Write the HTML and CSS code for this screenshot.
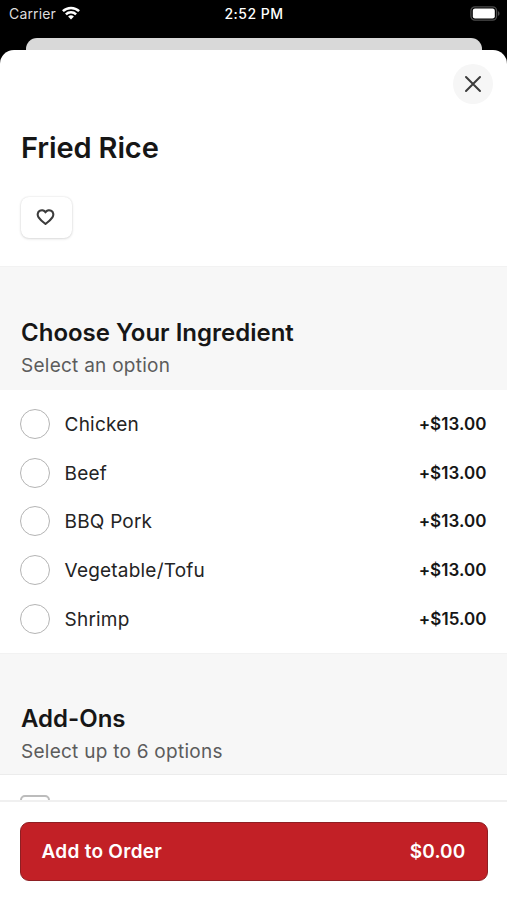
FILE: index.html
```html
<!DOCTYPE html>
<html lang="en">
<head>
<meta charset="utf-8">
<title>Fried Rice</title>
<link rel="stylesheet" href="styles.css">
</head>
<body>
<div class="screen">
  <header class="status">
    <div class="carrier"><span>Carrier</span>
      <svg class="wifi" width="18" height="14" viewBox="0 0 18 14" fill="none" stroke="#fff" stroke-width="2.5"><path d="M.9 5.2a11.6 11.6 0 0 1 16.2 0M3.9 8.3a7.3 7.3 0 0 1 10.2 0"/><path d="M9 13.5 6.1 10.6a4.1 4.1 0 0 1 5.8 0Z" fill="#fff" stroke="none"/></svg>
    </div>
    <span class="time">2:52 PM</span>
    <svg class="battery" width="31" height="15" viewBox="0 0 31 15"><rect x=".9" y=".9" width="25.7" height="13.2" rx="4" fill="none" stroke="#4c4c4c" stroke-width="1.3"/><rect x="2.8" y="2.6" width="22" height="9.8" rx="2.2" fill="#fff"/><path d="M28 5.2c2 .7 2 3.9 0 4.6Z" fill="#4c4c4c"/></svg>
  </header>
  <div class="peek"></div>
  <main class="sheet">
    <div class="toolbar">
      <button class="close" aria-label="Close"><svg width="18" height="18" viewBox="0 0 18 18" fill="none" stroke="#3c3c3c" stroke-width="2" stroke-linecap="round"><path d="m2 2 14 14M16 2 2 16"/></svg></button>
    </div>
    <section class="intro">
      <h1>Fried Rice</h1>
      <button class="favorite" aria-label="Favorite"><svg width="19" height="17" viewBox="0 0 20 18" fill="none" stroke="#3c3c3c" stroke-width="2.2" stroke-linejoin="round"><path d="M10 3.5C8.5 1.2 5.7.8 3.7 2.1 1.4 3.6 1.2 6.7 2.7 8.9 4.2 11.2 7 13.7 10 15.9c3-2.2 5.8-4.7 7.3-7 1.5-2.2 1.3-5.3-1-6.8-2-1.3-4.8-.9-6.3 1.4Z"/></svg></button>
    </section>
    <section class="group">
      <h2>Choose Your Ingredient</h2>
      <p>Select an option</p>
    </section>
    <ul class="options">
      <li><i class="radio"></i><span class="name">Chicken</span><b>+$13.00</b></li>
      <li><i class="radio"></i><span class="name">Beef</span><b>+$13.00</b></li>
      <li><i class="radio"></i><span class="name">BBQ Pork</span><b>+$13.00</b></li>
      <li><i class="radio"></i><span class="name">Vegetable/Tofu</span><b>+$13.00</b></li>
      <li><i class="radio"></i><span class="name">Shrimp</span><b>+$15.00</b></li>
    </ul>
    <section class="group addons">
      <h2>Add-Ons</h2>
      <p>Select up to 6 options</p>
    </section>
    <div class="more"><i class="checkbox"></i></div>
  </main>
  <footer class="footer">
    <button class="order"><span>Add to Order</span><span class="total">$0.00</span></button>
  </footer>
</div>
</body>
</html>
```
FILE: styles.css
```css
* { box-sizing: border-box; }
body, h1, h2, p, ul { margin: 0; padding: 0; }
body { background: #000; font-family: Inter, sans-serif; color: #161616; }
button { font: inherit; border: 0; padding: 0; display: flex; align-items: center; justify-content: center; }
svg { display: block; flex: none; }
.screen { width: 507px; height: 900px; display: flex; flex-direction: column; overflow: hidden; }
.status { height: 38px; padding: 4px 6px 0 9px; display: grid; grid-template-columns: 1fr auto 1fr; align-items: start; color: #fff; font-size: 14px; line-height: 20px; }
.carrier { display: flex; gap: 6px; color: #ddd; letter-spacing: .15px; }
.wifi { margin-top: 2px; }
.time { font-weight: 500; letter-spacing: .5px; margin-left: -2px; }
.battery { justify-self: end; margin-top: 2px; }
.peek { height: 12px; margin: 0 25px 0 26px; background: #d9d9d9; border-radius: 11px 11px 0 0; flex: none; }
.sheet { flex: 1; min-height: 0; overflow: hidden; background: #fff; border-radius: 14px 14px 0 0; display: flex; flex-direction: column; }
.sheet > * { flex: none; }
.toolbar { height: 68px; padding: 14px 14px 0 0; display: flex; justify-content: flex-end; }
.close { width: 40px; height: 40px; border-radius: 50%; background: #f6f6f6; }
.intro { height: 148px; padding: 12px 21px 0; }
h1 { font-size: 29px; line-height: 36px; font-weight: 600; letter-spacing: -.12px; }
.favorite { width: 51px; height: 41px; margin-top: 31px; padding: 0 2px 1px 0; border-radius: 8px; background: #fff; box-shadow: 0 0 2px rgba(0,0,0,.12), 0 1px 3px rgba(0,0,0,.12); }
.group { height: 124px; padding: 50px 21px 0; background: #f7f7f7; border-top: 1px solid #f2f2f2; }
h2 { font-size: 24px; line-height: 32px; font-weight: 600; }
.group p { font-size: 19px; line-height: 28px; margin-top: 3px; color: #5c5c5c; letter-spacing: .26px; }
.options { height: 263px; padding-top: 9.5px; list-style: none; }
.options li { height: 48.8px; padding: 0 20.5px 0 20px; display: flex; align-items: center; font-size: 19px; }
.radio { width: 30px; height: 30px; border: 1.5px solid #b4b4b4; border-radius: 50%; margin-right: 14.6px; }
.name { flex: 1; padding-top: 2px; color: #242424; letter-spacing: .2px; line-height: 24px; }
.options b { font-size: 17px; font-weight: 600; letter-spacing: .05px; }
.addons { height: 122px; padding-top: 49px; border-bottom: 1px solid #ececec; }
.more { padding: 20px; }
.checkbox { display: block; width: 30px; height: 30px; border: 2px solid #bcbcbc; border-radius: 5px; }
.footer { height: 100px; background: #fff; border-top: 2px solid #f0f0f0; padding: 20px 19px 0 20px; flex: none; }
.order { width: 100%; height: 59px; padding: 0 21.5px 0 20.5px; justify-content: space-between; background: #c22026; border: 1px solid #8e1f23; border-radius: 9px; color: #fff; font-size: 19px; font-weight: 600; letter-spacing: .28px; }
.total { letter-spacing: .15px; }
```
